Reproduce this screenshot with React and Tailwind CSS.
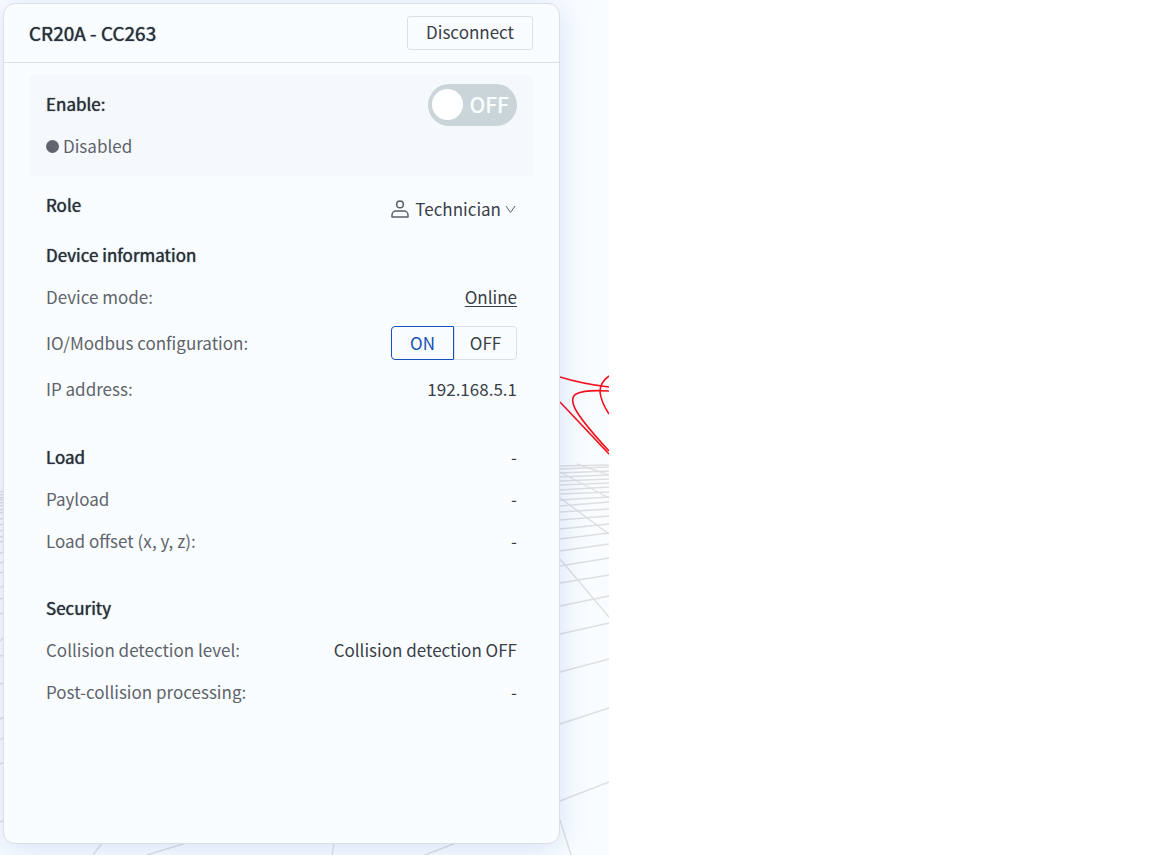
import { useState } from "react";

const FONT = "font-['Noto_Sans_CJK_SC','Noto_Sans',sans-serif]";

// [y at the card edge, y at the scene edge]
const RIGHT_GRID = [
  [466, 465], [469, 467], [473, 471], [477, 475], [481, 479], [485, 483],
  [490, 487], [494, 492], [500, 497], [506, 502], [512, 509], [520, 516],
  [529, 524], [539, 533], [551, 544], [566, 558], [583, 575], [606, 596],
  [634, 623], [672, 659], [724, 708], [801, 782],
];

const LEFT_GRID = [
  492, 495, 498, 500, 503, 506, 510, 513, 519, 525, 531, 537, 542, 553, 563,
  573, 599, 614, 656, 684,
];

function SceneBackdrop() {
  return (
    <svg
      className="absolute left-0 top-0"
      width="609"
      height="855"
      viewBox="0 0 609 855"
      fill="none"
      aria-hidden="true"
    >
      <g stroke="#dedfe1" strokeWidth="1.4">
        {RIGHT_GRID.map(([from, to]) => (
          <line key={from} x1="560" y1={from} x2="609" y2={to} />
        ))}
        <path d="M577 464L609 475M560 472L609 498M560 498L609 534M560 559L609 617M560 820L571 855" />
        {LEFT_GRID.map((y) => (
          <line key={y} x1="0" y1={y} x2="4" y2={y - 1} />
        ))}
        <path d="M0 588L4 585M0 641L4 637M0 719L4 717M0 740L4 737M0 764L4 762M0 822L4 820" />
        <path d="M102 843L93 855M186 843L147 855M334 843L332 855M456 843L425 855" />
      </g>
      <g stroke="#f5101d" strokeWidth="1.6">
        <path d="M560 377C576 382 592 385 609 387" />
        <path d="M609 391C594 390 582 391 576 394C571 397 572 404 577 412C585 425 597 438 609 451" />
        <path d="M560 402L609 454" />
        <path d="M609 376C602 381 600 386 600 392C601 401 605 408 609 414" />
      </g>
    </svg>
  );
}

function UserIcon() {
  return (
    <svg width="18" height="18" viewBox="0 0 18 18" fill="none" stroke="#5b6069" strokeWidth="1.5">
      <circle cx="9" cy="4.4" r="3.3" />
      <path d="M1 17v-2a4 4 0 0 1 4-4h8a4 4 0 0 1 4 4v2z" strokeLinejoin="round" />
    </svg>
  );
}

function ChevronIcon() {
  return (
    <svg
      className="pointer-events-none"
      width="12"
      height="10"
      viewBox="0 0 12 10"
      fill="none"
      stroke="#5b6069"
      strokeWidth="1"
    >
      <path d="M1 2L5.500 8.500L10 2" />
    </svg>
  );
}

const HEADING = "text-[#2b303b] [text-shadow:0_0_1px_currentColor]";

function SectionTitle({ children }) {
  return <h2 className={HEADING}>{children}</h2>;
}

function InfoRow({ label, children }) {
  return (
    <div className="flex items-center justify-between">
      <span className="text-[#5f636b]">{label}</span>
      {children}
    </div>
  );
}

export default function App() {
  const [enabled, setEnabled] = useState(false);
  const [ioConfig, setIoConfig] = useState("ON");
  const [role, setRole] = useState("Technician");

  return (
    <div className={`${FONT} min-h-screen bg-white text-[17px] leading-[26px] text-[#3a3e47]`}>
      <main className="relative flex min-h-screen w-full max-w-[609px] overflow-hidden bg-[#f9fdff] pt-[3px] pr-[49px] pb-[11px] pl-[3px]">
        <SceneBackdrop />

        <section className="relative flex-1 rounded-[12px] border border-[#dcdfe5] bg-[#f9fdff] shadow-[0_4px_30px_rgba(60,100,210,0.18)]">
          <header className="flex items-center justify-between border-b border-[#dcdfe5] py-3 pr-[26px] pl-[25px]">
            <h1 className={`text-[19px] ${HEADING}`}>CR20A - CC263</h1>
            <button type="button" className="cursor-pointer rounded-[3px] border border-[#dcdfe5] px-[18px] pt-[2px] pb-1">
              Disconnect
            </button>
          </header>

          <div className="pt-3 pr-[26px] pb-4 pl-[25px]">
            <div className="rounded-[4px] bg-[#f6f9fc] pt-[9px] pr-4 pb-[17px] pl-[17px]">
              <div className="flex items-center justify-between">
                <span id="enable-label" className={`pb-[2px] ${HEADING}`}>
                  Enable:
                </span>
                <button
                  type="button"
                  role="switch"
                  aria-checked={enabled}
                  aria-labelledby="enable-label"
                  onClick={() => setEnabled(!enabled)}
                  className={`flex h-[42px] w-[89px] cursor-pointer items-center justify-between rounded-full pr-2 pb-[2px] pl-1 ${
                    enabled ? "flex-row-reverse bg-[#1650b8]" : "bg-[#cad5d9]"
                  }`}
                >
                  <span className="size-[31px] rounded-full bg-white" />
                  <span className="text-[21px] font-medium text-[#fafeff]">{enabled ? "ON" : "OFF"}</span>
                </button>
              </div>
              <div className="mt-[7px] flex items-center gap-1 text-[#5f636b]">
                <span className="size-[13px] rounded-full bg-[#616570]" />
                {enabled ? "Enabled" : "Disabled"}
              </div>
            </div>

            <div className="pt-4 pr-4 pl-[17px]">
              <div className="mb-5 flex items-start justify-between">
                <label htmlFor="role" className={HEADING}>
                  Role
                </label>
                <div className="flex items-center gap-[6px] pt-1">
                  <UserIcon />
                  <div className="flex items-center gap-1">
                    <select
                      id="role"
                      value={role}
                      onChange={(e) => setRole(e.target.value)}
                      className="field-sizing-content cursor-pointer appearance-none bg-transparent"
                    >
                      <option>Technician</option>
                    </select>
                    <ChevronIcon />
                  </div>
                </div>
              </div>

              <div className="flex flex-col gap-4">
                <SectionTitle>Device information</SectionTitle>
                <InfoRow label="Device mode:">
                  <a href="#mode" className="underline underline-offset-2">
                    Online
                  </a>
                </InfoRow>
                <InfoRow label="IO/Modbus configuration:">
                  <div className="flex">
                    {["ON", "OFF"].map((value) => (
                      <button
                        key={value}
                        type="button"
                        aria-pressed={ioConfig === value}
                        onClick={() => setIoConfig(value)}
                        className={`w-[63px] cursor-pointer border py-[3px] first:rounded-l-[4px] last:rounded-r-[4px] ${
                          ioConfig === value ? "border-[#1650b8] text-[#1650b8]" : "border-[#dcdfe5]"
                        }`}
                      >
                        {value}
                      </button>
                    ))}
                  </div>
                </InfoRow>
                <InfoRow label="IP address:">192.168.5.1</InfoRow>
              </div>

              <div className="mt-[42px] flex flex-col gap-4">
                <div className="flex items-center justify-between">
                  <SectionTitle>Load</SectionTitle>
                  <span>-</span>
                </div>
                <InfoRow label="Payload">-</InfoRow>
                <InfoRow label="Load offset (x, y, z):">-</InfoRow>
              </div>

              <div className="mt-[41px] flex flex-col gap-4">
                <SectionTitle>Security</SectionTitle>
                <InfoRow label="Collision detection level:">Collision detection OFF</InfoRow>
                <InfoRow label="Post-collision processing:">-</InfoRow>
              </div>
            </div>
          </div>
        </section>
      </main>
    </div>
  );
}
